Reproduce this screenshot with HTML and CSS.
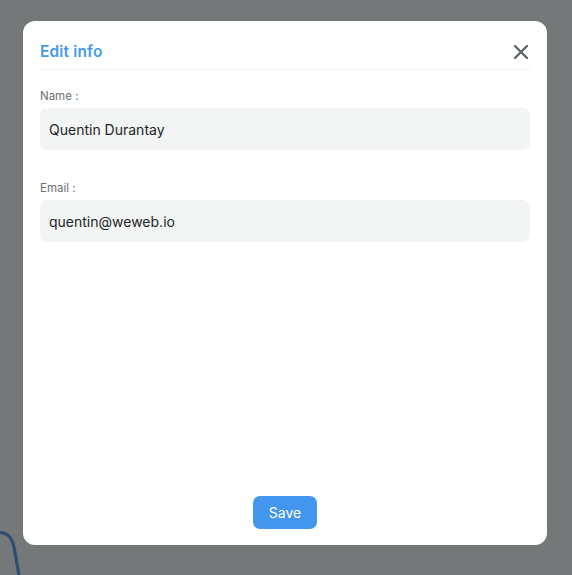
FILE: index.html
```html
<!DOCTYPE html>
<html>
<head>
<meta charset="utf-8">
<link rel="stylesheet" href="styles.css">
</head>
<body>
<svg class="bg-curve" width="40" height="60" viewBox="0 0 40 60" aria-hidden="true">
  <path d="M-4 8 C6 6 12 12 14 22 L20 56" fill="none" stroke="#2d4e6f" stroke-width="3.2" stroke-linecap="round"/>
</svg>
<div class="overlay">
  <div class="modal">
    <div class="header">
      <h1 class="title">Edit info</h1>
      <button class="close" aria-label="Close">
        <svg width="16" height="16" viewBox="0 0 16 16"><path d="M2 2 L14 14 M14 2 L2 14" stroke="#5f6669" stroke-width="2.4" stroke-linecap="round"/></svg>
      </button>
    </div>
    <div class="field">
      <label class="label">Name :</label>
      <div class="input">Quentin Durantay</div>
    </div>
    <div class="field">
      <label class="label">Email :</label>
      <div class="input">quentin@weweb.io</div>
    </div>
    <div class="footer">
      <button class="save">Save</button>
    </div>
  </div>
</div>
</body>
</html>
```

FILE: styles.css
```css
html, body {
  margin: 0;
  padding: 0;
}
body {
  width: 572px;
  height: 575px;
  background: #747878;
  font-family: Inter, "Noto Sans", sans-serif;
  position: relative;
  overflow: hidden;
}
.bg-curve {
  position: absolute;
  left: 0;
  top: 525px;
}
.overlay {
  padding: 21px 25px 0 23px;
}
.modal {
  position: relative;
  width: 524px;
  height: 524px;
  box-sizing: border-box;
  background: #ffffff;
  border-radius: 12px;
  padding: 0 17px 16px 17px;
  display: flex;
  flex-direction: column;
}
.header {
  display: flex;
  align-items: center;
  justify-content: space-between;
  height: 48px;
  border-bottom: 1px solid #eef0f0;
}
.title {
  margin: 0;
  padding-top: 14px;
  font-size: 15.5px;
  font-weight: 600;
  color: #4499ea;
  line-height: 36px;
  letter-spacing: 0.15px;
}
.close {
  border: 0;
  background: none;
  padding: 0;
  margin-top: 14px;
  margin-right: 1px;
  width: 16px;
  height: 16px;
  display: flex;
}
.field {
  display: flex;
  flex-direction: column;
  margin-top: 19px;
}
.field + .field {
  margin-top: 31px;
}
.label {
  font-size: 11.5px;
  color: #6b7174;
  line-height: 15px;
  margin-bottom: 4px;
}
.input {
  height: 42px;
  box-sizing: border-box;
  background: #f3f4f4;
  border-radius: 7px;
  padding: 0 9px;
  font-size: 14px;
  color: #222628;
  display: flex;
  align-items: center;
}
.footer {
  margin-top: auto;
  display: flex;
  justify-content: center;
}
.save {
  width: 64px;
  height: 33px;
  border: 0;
  border-radius: 7px;
  background: #4296ee;
  color: #ffffff;
  font-family: Inter, "Noto Sans", sans-serif;
  font-size: 14px;
  padding: 0;
}
```
